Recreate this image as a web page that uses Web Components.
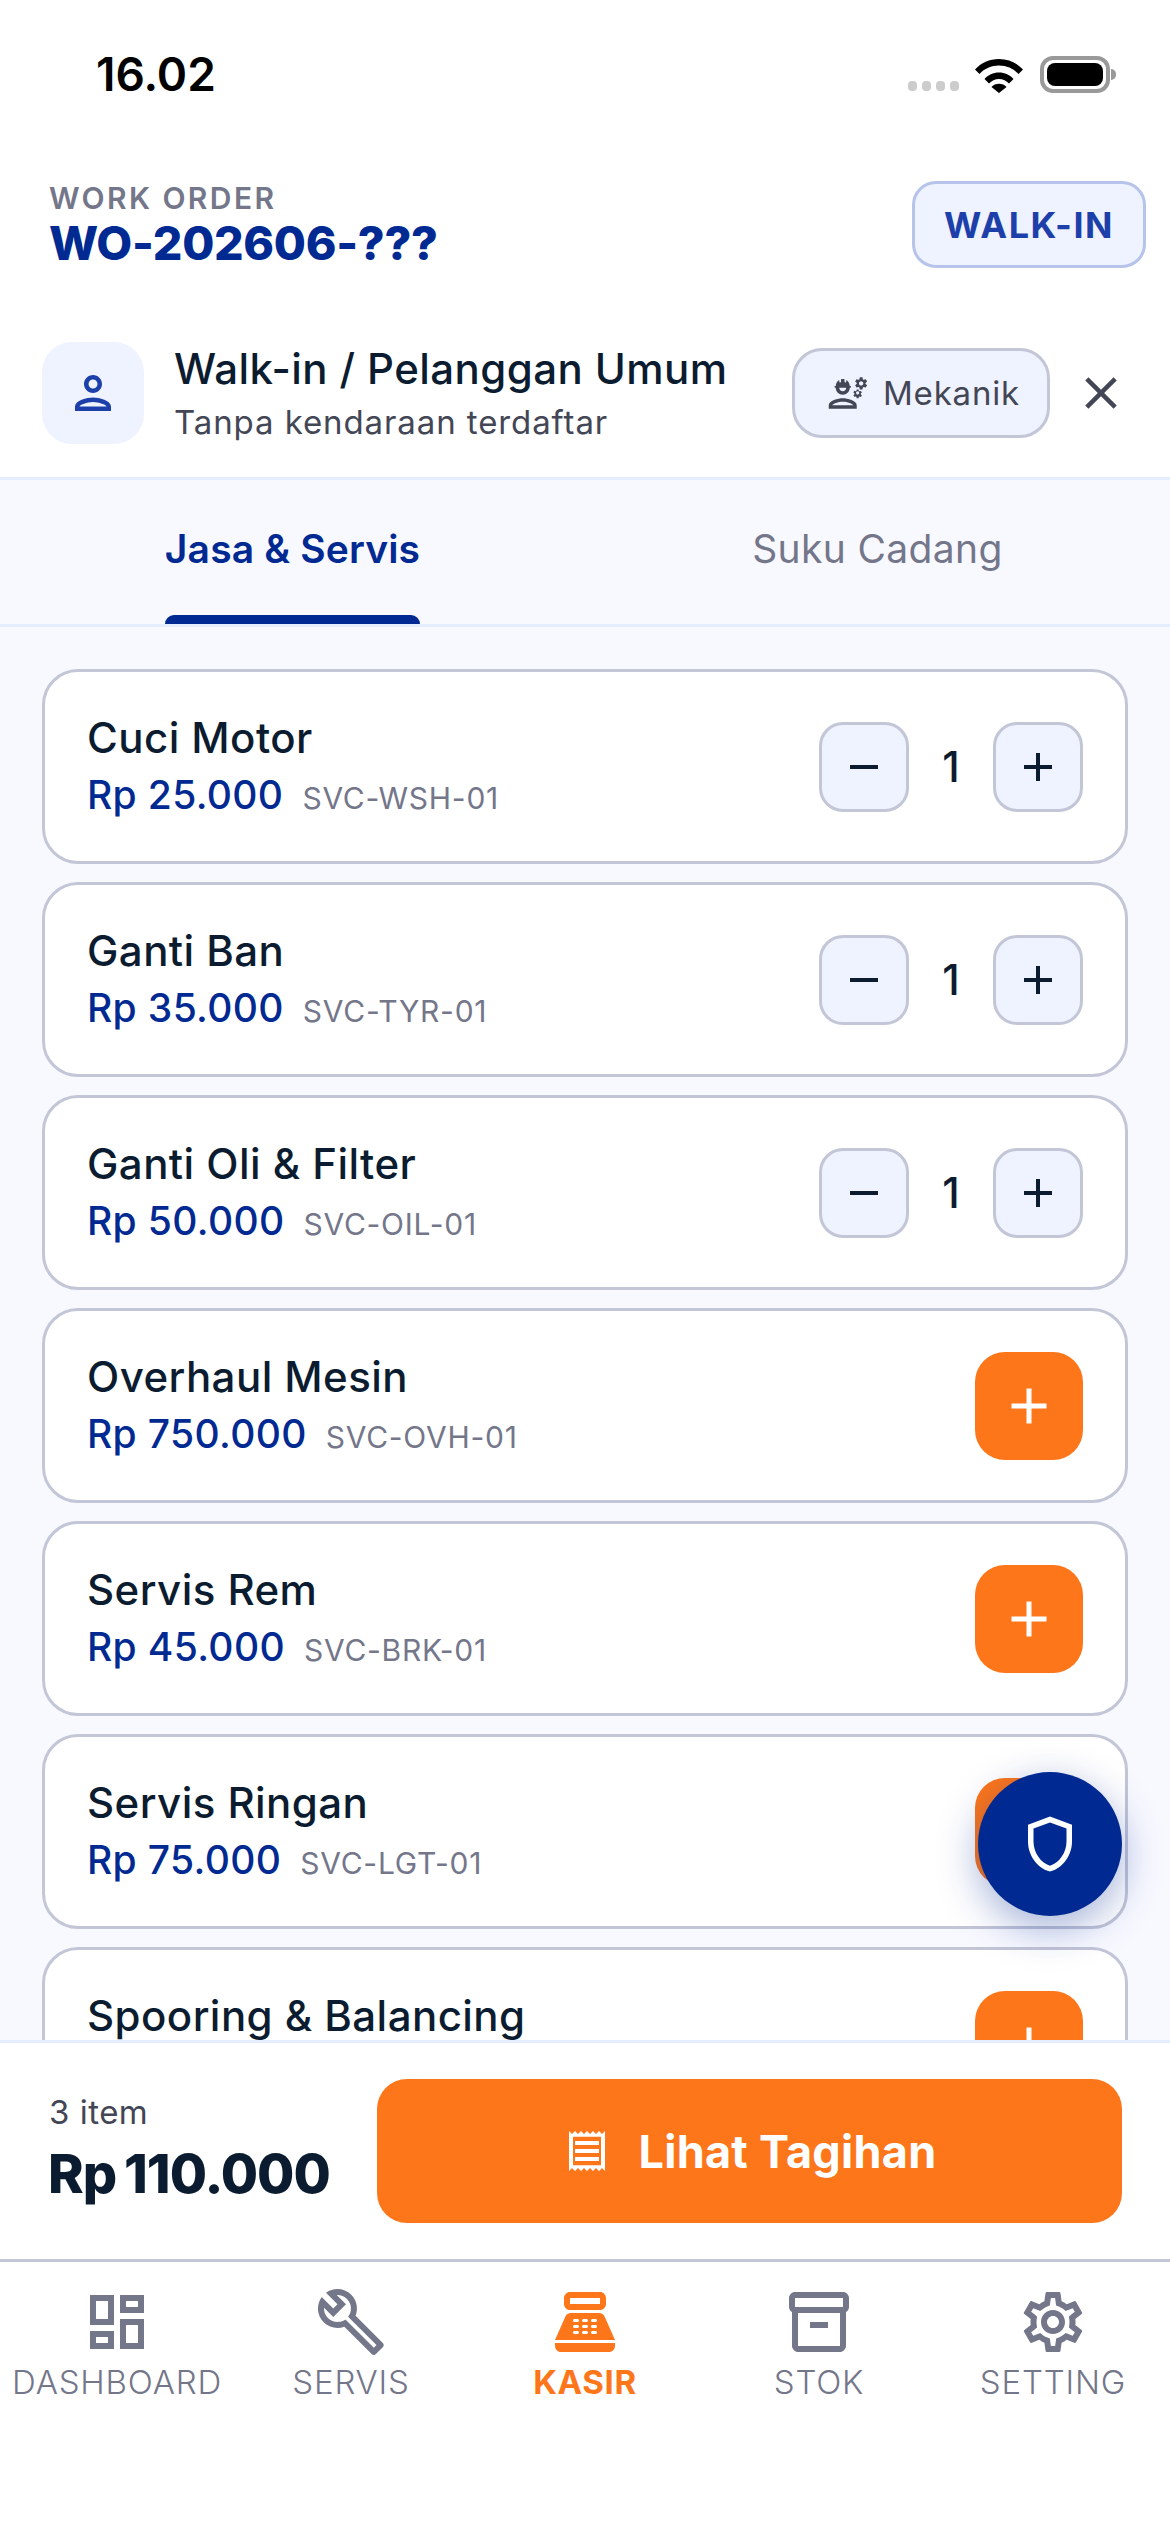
<!DOCTYPE html>
<html lang="id">
<head>
<meta charset="utf-8">
<title>Kasir</title>
<style>
  html, body { margin: 0; background: #fff; }
  body { font-family: Inter, "Noto Sans", sans-serif; color: #0b1c30; }
</style>
</head>
<body>
<kasir-app>
  <status-bar></status-bar>
  <wo-header label="WORK ORDER" number="WO-202606-???" badge="WALK-IN"></wo-header>
  <customer-row name="Walk-in / Pelanggan Umum" sub="Tanpa kendaraan terdaftar"></customer-row>
  <tab-bar></tab-bar>
  <item-list>
    <svc-card price="Rp 25.000" code="SVC-WSH-01" qty="1">Cuci Motor</svc-card>
    <svc-card price="Rp 35.000" code="SVC-TYR-01" qty="1">Ganti Ban</svc-card>
    <svc-card price="Rp 50.000" code="SVC-OIL-01" qty="1">Ganti Oli &amp; Filter</svc-card>
    <svc-card price="Rp 750.000" code="SVC-OVH-01">Overhaul Mesin</svc-card>
    <svc-card price="Rp 45.000" code="SVC-BRK-01">Servis Rem</svc-card>
    <svc-card price="Rp 75.000" code="SVC-LGT-01">Servis Ringan</svc-card>
    <svc-card>Spooring &amp; Balancing</svc-card>
    <shield-fab slot="fab"></shield-fab>
  </item-list>
  <bill-footer count="3 item" total="Rp 110.000">Lihat Tagihan</bill-footer>
  <bottom-nav></bottom-nav>
</kasir-app>

<script>
// iconos material, viewBox 24
const ICONS = {
  person: "M12 6c1.1 0 2 .9 2 2s-.9 2-2 2-2-.9-2-2 .9-2 2-2m0 10c2.7 0 5.8 1.29 6 2H6c.23-.72 3.31-2 6-2m0-12C9.79 4 8 5.79 8 8s1.79 4 4 4 4-1.79 4-4-1.79-4-4-4zm0 10c-2.67 0-8 1.34-8 4v2h16v-2c0-2.66-5.33-4-8-4z",
  engineering: "M9 15c-2.67 0-8 1.34-8 4v2h16v-2c0-2.66-5.33-4-8-4zm-6 4c.22-.72 3.31-2 6-2 2.7 0 5.8 1.29 6 2H3zM4.74 9H5c0 2.21 1.79 4 4 4s4-1.79 4-4h.26c.27 0 .49-.22.49-.49v-.02c0-.27-.22-.49-.49-.49H13c0-1.48-.81-2.75-2-3.45v.95c0 .28-.22.5-.5.5s-.5-.22-.5-.5V4.14C9.68 4.06 9.35 4 9 4s-.68.06-1 .14V5.5c0 .28-.22.5-.5.5S7 5.78 7 5.5v-.95C5.81 5.25 5 6.52 5 8h-.26c-.27 0-.49.22-.49.49v.03c0 .26.22.48.49.48zM11 9c0 1.1-.9 2-2 2s-2-.9-2-2h4zM21.98 6.23l.93-.83-.75-1.3-1.19.39c-.14-.11-.3-.2-.47-.27L20.25 3h-1.5l-.25 1.22c-.17.07-.33.16-.48.27l-1.18-.39-.75 1.3.93.83c-.02.17-.02.35 0 .52l-.93.85.75 1.3 1.2-.38c.13.1.28.18.43.25l.28 1.23h1.5l.27-1.22c.16-.07.3-.15.44-.25l1.19.38.75-1.3-.93-.85c.03-.19.02-.36.01-.53zM19.5 7.75c-.69 0-1.25-.56-1.25-1.25s.56-1.25 1.25-1.25 1.25.56 1.25 1.25-.56 1.25-1.25 1.25zM19.4 10.79l-.85.28c-.1-.08-.21-.14-.33-.19l-.18-.88h-1.07l-.18.87c-.12.05-.24.12-.34.19l-.84-.28-.54.93.66.59c-.01.13-.01.25 0 .37l-.66.61.54.93.86-.27c.1.07.2.13.31.18l.18.88h1.07l.19-.87c.11-.05.22-.11.32-.18l.85.27.54-.93-.66-.61c.01-.13.01-.25 0-.37l.66-.59-.53-.93zM17.5 12.85c-.49 0-.9-.4-.9-.89s.4-.9.89-.9.9.4.9.89-.4.9-.9.9z",
  close: "M19 6.41 17.59 5 12 10.59 6.41 5 5 6.41 10.59 12 5 17.59 6.41 19 12 13.41 17.59 19 19 17.59 13.41 12z",
  add: "M19 13h-6v6h-2v-6H5v-2h6V5h2v6h6v2z",
  remove: "M19 13H5v-2h14v2z",
  shield: "M12 2 4 5v6.09c0 5.05 3.41 9.76 8 10.91 4.59-1.15 8-5.86 8-10.91V5l-8-3zm6 9.09c0 4-2.55 7.7-6 8.83-3.45-1.13-6-4.82-6-8.83v-4.7l6-2.25 6 2.25v4.7z",
  receipt: "M19.5 3.5 18 2l-1.5 1.5L15 2l-1.5 1.5L12 2l-1.5 1.5L9 2 7.5 3.5 6 2 4.5 3.5 3 2v20l1.5-1.5L6 22l1.5-1.5L9 22l1.5-1.5L12 22l1.5-1.5L15 22l1.5-1.5L18 22l1.5-1.5L21 22V2l-1.5 1.5zM19 19.09H5V4.91h14v14.18zM6 15h12v2H6zm0-4h12v2H6zm0-4h12v2H6z",
  dashboard: "M19 5v2h-4V5h4M9 5v6H5V5h4m10 8v6h-4v-6h4M9 17v2H5v-2h4M21 3h-8v6h8V3zM11 3H3v10h8V3zm10 8h-8v10h8V11zm-10 4H3v6h8v-6z",
  build: "M22.61 18.99l-9.08-9.08c.93-2.34.45-5.1-1.44-7C9.79.61 6.21.4 3.66 2.26L7.5 6.11 6.08 7.52 2.25 3.69C.39 6.23.6 9.82 2.9 12.11c1.86 1.86 4.57 2.35 6.88 1.48l9.11 9.11c.39.39 1.02.39 1.41 0l2.3-2.3c.4-.38.4-1.01.01-1.41zm-3 1.6l-9.46-9.46c-.61.45-1.29.72-2 .82-1.36.2-2.79-.21-3.83-1.25C3.37 9.76 2.93 8.5 3 7.26l3.09 3.09 4.24-4.24-3.09-3.09c1.24-.07 2.49.37 3.44 1.31 1.08 1.08 1.49 2.57 1.24 3.96-.12.71-.42 1.37-.88 1.96l9.45 9.45-.88.88z",
  pos: "M17 2H7c-1.1 0-2 .9-2 2v2c0 1.1.9 2 2 2h10c1.1 0 2-.9 2-2V4c0-1.1-.9-2-2-2zm0 4H7V4h10v2zm3 16H4c-1.1 0-2-.9-2-2v-1h20v1c0 1.1-.9 2-2 2zm-1.47-11.81C18.21 9.47 17.49 9 16.7 9H7.3c-.79 0-1.51.47-1.83 1.19L2 18h20l-3.47-7.81zM9.5 16h-1c-.28 0-.5-.22-.5-.5s.22-.5.5-.5h1c.28 0 .5.22.5.5s-.22.5-.5.5zm0-2h-1c-.28 0-.5-.22-.5-.5s.22-.5.5-.5h1c.28 0 .5.22.5.5s-.22.5-.5.5zm0-2h-1c-.28 0-.5-.22-.5-.5s.22-.5.5-.5h1c.28 0 .5.22.5.5s-.22.5-.5.5zm3 4h-1c-.28 0-.5-.22-.5-.5s.22-.5.5-.5h1c.28 0 .5.22.5.5s-.22.5-.5.5zm0-2h-1c-.28 0-.5-.22-.5-.5s.22-.5.5-.5h1c.28 0 .5.22.5.5s-.22.5-.5.5zm0-2h-1c-.28 0-.5-.22-.5-.5s.22-.5.5-.5h1c.28 0 .5.22.5.5s-.22.5-.5.5zm3 4h-1c-.28 0-.5-.22-.5-.5s.22-.5.5-.5h1c.28 0 .5.22.5.5s-.22.5-.5.5zm0-2h-1c-.28 0-.5-.22-.5-.5s.22-.5.5-.5h1c.28 0 .5.22.5.5s-.22.5-.5.5zm0-2h-1c-.28 0-.5-.22-.5-.5s.22-.5.5-.5h1c.28 0 .5.22.5.5s-.22.5-.5.5z",
  box: "M20 2H4c-1 0-2 .9-2 2v3.01c0 .72.43 1.34 1 1.69V20c0 1.1 1.1 2 2 2h14c.9 0 2-.9 2-2V8.7c.57-.35 1-.96 1-1.69V4c0-1.1-1-2-2-2zm-1 18H5V9h14v11zm1-13H4V4h16v3zM9 12h6v2H9z",
  gear: "M19.43 12.98c.04-.32.07-.64.07-.98 0-.34-.03-.66-.07-.98l2.11-1.65c.19-.15.24-.42.12-.64l-2-3.46c-.09-.16-.26-.25-.44-.25-.06 0-.12.01-.17.03l-2.49 1c-.52-.4-1.08-.73-1.69-.98l-.38-2.65C14.46 2.18 14.25 2 14 2h-4c-.25 0-.46.18-.49.42l-.38 2.65c-.61.25-1.17.59-1.69.98l-2.49-1c-.06-.02-.12-.03-.18-.03-.17 0-.34.09-.43.25l-2 3.46c-.13.22-.07.49.12.64l2.11 1.65c-.04.32-.07.65-.07.98 0 .33.03.66.07.98l-2.11 1.65c-.19.15-.24.42-.12.64l2 3.46c.09.16.26.25.44.25.06 0 .12-.01.17-.03l2.49-1c.52.4 1.08.73 1.69.98l.38 2.65c.03.24.24.42.49.42h4c.25 0 .46-.18.49-.42l.38-2.65c.61-.25 1.17-.59 1.69-.98l2.49 1c.06.02.12.03.18.03.17 0 .34-.09.43-.25l2-3.46c.12-.22.07-.49-.12-.64l-2.11-1.65zm-1.98-1.71c.04.31.05.52.05.73 0 .21-.02.43-.05.73l-.14 1.13.89.7 1.08.84-.7 1.21-1.27-.51-1.04-.42-.9.68c-.43.32-.84.56-1.25.73l-1.06.43-.16 1.13-.2 1.35h-1.4l-.19-1.35-.16-1.13-1.06-.43c-.43-.18-.83-.41-1.23-.71l-.91-.7-1.06.43-1.27.51-.7-1.21 1.08-.84.89-.7-.14-1.13c-.03-.31-.05-.54-.05-.74s.02-.43.05-.73l.14-1.13-.89-.7-1.08-.84.7-1.21 1.27.51 1.04.42.9-.68c.43-.32.84-.56 1.25-.73l1.06-.43.16-1.13.2-1.35h1.39l.19 1.35.16 1.13 1.06.43c.43.18.83.41 1.23.71l.91.7 1.06-.43 1.27-.51.7 1.21-1.07.85-.89.7.14 1.13zM12 8c-2.21 0-4 1.79-4 4s1.79 4 4 4 4-1.79 4-4-1.79-4-4-4zm0 6c-1.1 0-2-.9-2-2s.9-2 2-2 2 .9 2 2-.9 2-2 2z"
};
const icon = (name, size, color) =>
  `<svg width="${size}" height="${size}" viewBox="0 0 24 24" fill="${color}" style="display:block;flex:none"><path d="${ICONS[name]}"/></svg>`;

class Base extends HTMLElement {
  constructor() {
    super();
    this.attachShadow({ mode: "open" });
  }
  attr(n) { return this.getAttribute(n) || ""; }
  connectedCallback() { this.render(); }
}

class KasirApp extends Base {
  render() {
    this.shadowRoot.innerHTML = `
    <style>
      :host { display: flex; flex-direction: column; width: 1170px; height: 2532px; overflow: hidden; background: #fff; }
    </style>
    <slot></slot>`;
  }
}

class StatusBar extends Base {
  render() {
    this.shadowRoot.innerHTML = `
    <style>
      :host { display: flex; align-items: center; height: 150px; padding: 0 60px 2px 96px; box-sizing: border-box; }
      .time { font: 600 46px/1 Inter, sans-serif; color: #000; flex: 1; }
      .dots { display: flex; gap: 5px; margin-top: 24px; margin-right: 16px; }
      .dots i { width: 9px; height: 10px; border-radius: 4px; background: #ccc; }
      .batt { position: relative; width: 70px; height: 37px; box-sizing: border-box; border: 4px solid #999; border-radius: 13px; padding: 3px; margin-left: 17px; }
      .batt b { display: block; height: 100%; background: #000; border-radius: 8px; }
      .batt::after { content: ""; position: absolute; right: -10px; top: 9px; width: 5px; height: 11px; background: #999; border-radius: 0 6px 6px 0; }
    </style>
    <span class="time">16.02</span>
    <span class="dots"><i></i><i></i><i></i><i></i></span>
    <svg width="48" height="37" viewBox="0 0 48 37"><path d="M0 13.500C6 7 14.500 3 24 3s18 4 24 10.500L43.500 18C38.500 12.500 31.700 9.500 24 9.500S9.500 12.500 4.500 18z M9.500 23C13 19 18.200 16.500 24 16.500S35 19 38.500 23L34 27.500C31.500 24.800 28 23 24 23S16.500 24.800 14 27.500z M16.500 31C18.500 29 21 27.800 24 27.800S29.500 29 31.500 31L24 37z" fill="#000"/></svg>
    <span class="batt"><b></b></span>`;
  }
}

class WoHeader extends Base {
  render() {
    this.shadowRoot.innerHTML = `
    <style>
      :host { display: flex; align-items: center; justify-content: space-between; height: 159px; padding: 31px 24px 41px 49px; box-sizing: border-box; }
      .label { font: 600 30px/36px Inter, sans-serif; letter-spacing: 2.4px; color: #74768a; }
      .num { font: 800 46.500px/54px Inter, sans-serif; color: #002a92; letter-spacing: -.3px; }
      .badge { width: 234px; height: 87px; box-sizing: border-box; display: flex; align-items: center; justify-content: center; border: 3px solid #b6c4ec; border-radius: 24px; background: #eff3ff; font: 700 36px/1 Inter, sans-serif; letter-spacing: 1.5px; color: #1d3faa; }
    </style>
    <div><div class="label">${this.attr("label")}</div><div class="num">${this.attr("number")}</div></div>
    <div class="badge">${this.attr("badge")}</div>`;
  }
}

class CustomerRow extends Base {
  render() {
    this.shadowRoot.innerHTML = `
    <style>
      :host { display: flex; align-items: center; height: 171px; padding: 0 42px 0 42px; box-sizing: border-box; border-bottom: 3px solid #e5eeff; }
      .av { width: 102px; height: 102px; border-radius: 30px; background: #eff3ff; display: flex; align-items: center; justify-content: center; margin-right: 30px; flex: none; }
      .txt { flex: 1; min-width: 0; }
      .name { font: 450 42px/57px Inter, sans-serif; color: #0b1c30; white-space: nowrap; letter-spacing: .42px; }
      .sub { font: 400 33px/50px Inter, sans-serif; color: #434655; letter-spacing: .9px; white-space: nowrap; }
      .mek { display: flex; align-items: center; gap: 14px; width: 258px; height: 90px; box-sizing: border-box; padding-left: 32px; border: 3px solid #c3c6d7; border-radius: 30px; background: #eff3ff; font: 400 33px/1 Inter, sans-serif; letter-spacing: .8px; color: #434655; margin-right: 24px; }
    </style>
    <div class="av">${icon("person", 54, "#1d3faa")}</div>
    <div class="txt"><div class="name">${this.attr("name")}</div><div class="sub">${this.attr("sub")}</div></div>
    <div class="mek">${icon("engineering", 42, "#434655")}<span>Mekanik</span></div>
    ${icon("close", 54, "#434655")}`;
  }
}

class TabBar extends Base {
  render() {
    this.shadowRoot.innerHTML = `
    <style>
      :host { display: grid; grid-template-columns: 1fr 1fr; height: 147px; box-sizing: border-box; background: #f8f9ff; border-bottom: 3px solid #e5eeff; }
      .tab { display: flex; justify-content: center; align-items: center; }
      span { position: relative; height: 144px; display: flex; align-items: center; padding-bottom: 8px; box-sizing: border-box; font: 400 39px/1 Inter, sans-serif; color: #74768a; letter-spacing: .35px; }
      .on span { font-weight: 600; color: #002a92; letter-spacing: .15px; }
      .on span::after { content: ""; position: absolute; left: 0; right: 0; bottom: 0; height: 9px; background: #002a92; border-radius: 9px 9px 0 0; }
    </style>
    <div class="tab on"><span>Jasa &amp; Servis</span></div>
    <div class="tab"><span>Suku Cadang</span></div>`;
  }
}

class ItemList extends Base {
  render() {
    this.shadowRoot.innerHTML = `
    <style>
      :host { display: block; position: relative; flex: 1; min-height: 0; overflow: hidden; background: #f8f9ff; }
      .scroll { display: flex; flex-direction: column; gap: 18px; padding: 42px 42px 0; }
    </style>
    <div class="scroll"><slot></slot></div>
    <slot name="fab"></slot>`;
  }
}

class SvcCard extends Base {
  render() {
    const qty = this.attr("qty");
    const code = this.attr("code");
    const ctl = qty
      ? `<div class="qty"><div class="q">${icon("remove", 48, "#0b1c30")}</div><span>${qty}</span><div class="q">${icon("add", 48, "#0b1c30")}</div></div>`
      : `<div class="plus">${icon("add", 60, "#fff")}</div>`;
    this.shadowRoot.innerHTML = `
    <style>
      :host { display: flex; flex: none; align-items: center; justify-content: space-between; height: 195px; box-sizing: border-box; padding: 0 42px; background: #fff; border: 3px solid #c3c6d7; border-radius: 36px; }
      .txt { padding-bottom: 3px; }
      .name { font: 450 42px/59px Inter, sans-serif; color: #0b1c30; letter-spacing: .45px; }
      .row { display: flex; align-items: baseline; gap: 19px; height: 54px; margin-top: 1px; }
      .price { font: 500 39px/54px Inter, sans-serif; color: #002a92; letter-spacing: .35px; }
      .code { font: 400 30px/54px Inter, sans-serif; color: #74768a; letter-spacing: .75px; }
      .qty { display: flex; align-items: center; }
      .qty span { width: 84px; text-align: center; font: 450 42px/1 Inter, sans-serif; color: #0b1c30; }
      .q { width: 90px; height: 90px; box-sizing: border-box; display: flex; align-items: center; justify-content: center; background: #eff3ff; border: 3px solid #c3c6d7; border-radius: 24px; }
      .plus { width: 108px; height: 108px; display: flex; align-items: center; justify-content: center; background: #fe761a; border-radius: 30px; }
    </style>
    <div class="txt">
      <div class="name"><slot></slot></div>
      <div class="row"><span class="price">${this.attr("price")}</span><span class="code">${code}</span></div>
    </div>
    ${ctl}`;
  }
}

class ShieldFab extends Base {
  render() {
    this.shadowRoot.innerHTML = `
    <style>
      :host { position: absolute; right: 48px; bottom: 124px; width: 144px; height: 144px; border-radius: 50%; background: #002a92; display: flex; align-items: center; justify-content: center; box-shadow: 0 12px 40px rgba(0,42,146,.36); }
    </style>
    ${icon("shield", 66, "#fff")}`;
  }
}

class BillFooter extends Base {
  render() {
    this.shadowRoot.innerHTML = `
    <style>
      :host { display: flex; align-items: center; justify-content: space-between; height: 222px; box-sizing: border-box; padding: 0 48px 0 48px; background: #fff; border-top: 3px solid #e5eeff; border-bottom: 3px solid #c3c6d7; }
      .info { padding-bottom: 6px; }
      .cnt { font: 400 33px/45px Inter, sans-serif; color: #434655; letter-spacing: .5px; margin-bottom: 6px; padding-left: 1px; }
      .tot { font: 800 54px/66px Inter, sans-serif; color: #0b1c30; letter-spacing: -1px; word-spacing: -3px; }
      .btn { display: flex; align-items: center; justify-content: center; gap: 28px; width: 745px; height: 144px; background: #fe761a; border-radius: 30px; color: #fff; font: 700 45px/1 Inter, sans-serif; letter-spacing: .25px; }
    </style>
    <div class="info"><div class="cnt">${this.attr("count")}</div><div class="tot">${this.attr("total")}</div></div>
    <div class="btn">${icon("receipt", 48, "#fff")}<span><slot></slot></span></div>`;
  }
}

class BottomNav extends Base {
  render() {
    const items = [["dashboard", "DASHBOARD"], ["build", "SERVIS"], ["pos", "KASIR", 1], ["box", "STOK"], ["gear", "SETTING"]];
    this.shadowRoot.innerHTML = `
    <style>
      :host { display: grid; grid-template-columns: repeat(5, 1fr); height: 270px; box-sizing: border-box; padding-top: 24px; background: #fff; }
      .it { display: flex; flex-direction: column; align-items: center; color: #74768a; font: 350 33px/48px Inter, sans-serif; letter-spacing: .8px; }
      .it.on { color: #fe761a; font-weight: 700; letter-spacing: .6px; }
    </style>
    ${items.map(([i, t, on]) => `<div class="it ${on ? "on" : ""}">${icon(i, 72, on ? "#fe761a" : "#74768a")}<span>${t}</span></div>`).join("")}`;
  }
}

customElements.define("kasir-app", KasirApp);
customElements.define("status-bar", StatusBar);
customElements.define("wo-header", WoHeader);
customElements.define("customer-row", CustomerRow);
customElements.define("tab-bar", TabBar);
customElements.define("item-list", ItemList);
customElements.define("svc-card", SvcCard);
customElements.define("shield-fab", ShieldFab);
customElements.define("bill-footer", BillFooter);
customElements.define("bottom-nav", BottomNav);
</script>
</body>
</html>
